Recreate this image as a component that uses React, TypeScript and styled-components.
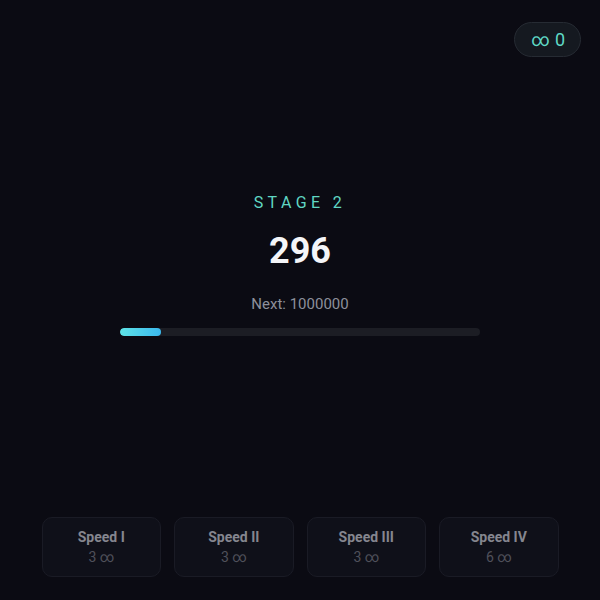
import React from "react";
import styled, { createGlobalStyle } from "styled-components";

const Global = createGlobalStyle`
  html, body { margin: 0; padding: 0; background: #0b0b13; }
  body { font-family: Roboto, "Noto Sans", sans-serif; }
  * { box-sizing: border-box; }
`;

const Page = styled.div`
  width: 600px;
  height: 600px;
  display: grid;
  grid-template-rows: auto 1fr auto;
  background: #0b0b13;
  color: #e8e9ee;
`;

const Header = styled.div`
  display: flex;
  justify-content: flex-end;
  padding: 22px 19px 0 0;
`;

const Badge = styled.div`
  height: 35px;
  padding: 0 15px 0 16px;
  border-radius: 18px;
  background: #151920;
  border: 1px solid #262b33;
  color: #5fd8c6;
  font-size: 18px;
  display: flex;
  align-items: center;
  gap: 5px;
`;

const Main = styled.div`
  display: flex;
  flex-direction: column;
  align-items: center;
  justify-content: center;
  padding-bottom: 46px;
`;

const Stage = styled.div`
  color: #60d7c3;
  font-size: 16px;
  letter-spacing: 4.4px;
  line-height: 19px;
`;

const Score = styled.div`
  margin-top: 18px;
  font-size: 36px;
  font-weight: 700;
  color: #f4f5f8;
  line-height: 42px;
`;

const Next = styled.div`
  margin-top: 23px;
  font-size: 15px;
  color: #8d909b;
  line-height: 18px;
`;

const Track = styled.div`
  margin-top: 15px;
  width: 360px;
  height: 8px;
  border-radius: 4px;
  background: #1c1d24;
  overflow: hidden;
`;

const Fill = styled.div`
  height: 100%;
  border-radius: 4px;
  background: linear-gradient(90deg, #5ee3e6, #3bb9ee);
`;

const Footer = styled.div`
  display: flex;
  justify-content: center;
  gap: 13px;
  padding: 0 0 23px;
`;

const Card = styled.div`
  width: 119.5px;
  height: 60px;
  border-radius: 10px;
  background: #0f1019;
  border: 1px solid #1a1b25;
  display: flex;
  flex-direction: column;
  align-items: center;
  justify-content: center;
  gap: 3px;
`;

const CardTitle = styled.div`
  font-size: 14px;
  font-weight: 700;
  color: #85868f;
  line-height: 17px;
`;

const CardCost = styled.div`
  font-size: 14px;
  color: #50515b;
  line-height: 17px;
`;

const upgrades = [
  { name: "Speed I", cost: 3 },
  { name: "Speed II", cost: 3 },
  { name: "Speed III", cost: 3 },
  { name: "Speed IV", cost: 6 },
];

export default function App() {
  const progress = 41 / 360;
  return (
    <>
      <Global />
      <Page>
        <Header>
          <Badge>
            <span>∞</span>
            <span>0</span>
          </Badge>
        </Header>
        <Main>
          <Stage>STAGE 2</Stage>
          <Score>296</Score>
          <Next>Next: 1000000</Next>
          <Track>
            <Fill style={{ width: `${progress * 100}%` }} />
          </Track>
        </Main>
        <Footer>
          {upgrades.map((u) => (
            <Card key={u.name}>
              <CardTitle>{u.name}</CardTitle>
              <CardCost>{u.cost} ∞</CardCost>
            </Card>
          ))}
        </Footer>
      </Page>
    </>
  );
}
